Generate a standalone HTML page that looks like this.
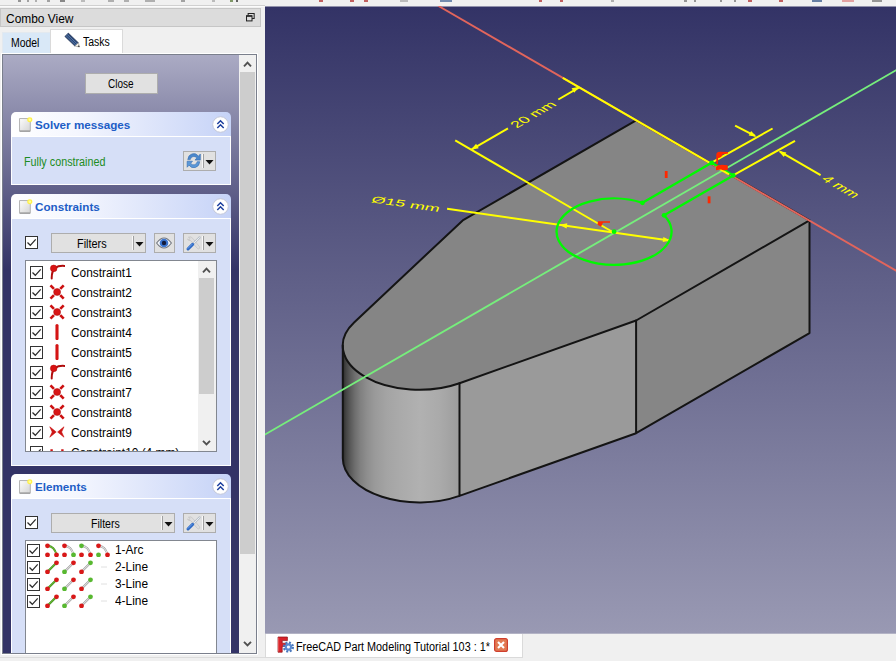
<!DOCTYPE html>
<html><head><meta charset="utf-8"><title>FreeCAD</title>
<style>
html,body{margin:0;padding:0;}
body{width:896px;height:661px;overflow:hidden;background:#f0f0f0;font-family:"Liberation Sans",sans-serif;font-size:12px;color:#000;}
#app{position:relative;width:896px;height:661px;overflow:hidden;background:#f0f0f0;}
#app div,#app span{position:absolute;box-sizing:border-box;white-space:nowrap;}
#app svg{position:absolute;}
.topline{left:0;top:5px;width:265px;height:1px;background:#d0d0d0;}
.topline2{left:0;top:6px;width:265px;height:1px;background:#fbfbfb;}
.tbres{top:0;height:1.5px;background:#555;}
#title{left:0;top:8px;width:261px;height:19px;background:#dcdcdc;border:1px solid #c6c6c6;}
#tabModel{left:2px;top:32px;width:49px;height:21px;background:#d9e8f7;border:1px solid #e3e9ef;border-bottom:none;}
#tabTasks{left:50px;top:29px;width:73px;height:25px;background:#fff;border:1px solid #dadada;border-bottom:none;}
#paneOuter{left:1px;top:53px;width:257px;height:602px;border:1px solid #fff;border-right-color:#fff;}
#pane{left:2px;top:54px;width:255px;height:600px;border:1px solid #7a7f8c;background:#f0f0f0;overflow:hidden;}
#scroll{left:0;top:0;width:236px;height:598px;background:linear-gradient(to bottom,#ababc4 0px,#333366 215px,#333366 100%);overflow:hidden;}
#vsb{left:236px;top:0;width:17px;height:598px;background:#f0f0f0;}
#vsb .thumb{left:1px;top:17px;width:15px;height:482px;background:#cdcdcd;}
.btn{background:#e1e1e1;border:1px solid #adadad;}
#app .t{line-height:14px;font-size:12px;}
.grp{left:8px;width:220px;}
.hdr{left:0;top:0;width:220px;height:25px;border-radius:5px 5px 0 0;background:linear-gradient(to right,#ffffff 0%,#f4f6fe 30%,#c6d3f7 100%);border-bottom:1px solid #fff;}
.hdr .t{font-weight:bold;color:#215dc6;}
.body{left:0;top:25px;width:220px;background:#d6dff7;border:1px solid #fff;border-top:none;}
.cb{width:13px;height:13px;background:#fff;border:1px solid #333;}
.list{background:#fff;border:1px solid #828790;overflow:hidden;}
#view{left:265px;top:6px;width:631px;height:628px;overflow:hidden;}
#view svg{left:0;top:0;}
#mdi{left:265px;top:634px;width:631px;height:27px;background:#f0f0f0;}
.mditab{left:0;top:0;width:258px;height:24px;background:#fff;border:1px solid #dadada;border-top:none;}
.fcico{left:11px;top:2px;}
.mdit{left:30px;top:6px;line-height:14px;transform-origin:0 50%;transform:scaleX(0.903);}
.mdix{left:228px;top:4px;width:14px;height:14px;}
.stline{left:0;top:657px;width:896px;height:1px;background:#dcdcdc;}

</style></head>
<body>
<div id="app">
<div class="topline"></div><div class="topline2"></div>
<div class="tbres" style="left:18px;width:3px;background:#777;opacity:.75"></div>
<div class="tbres" style="left:27px;width:2px;background:#888;opacity:.75"></div>
<div class="tbres" style="left:35px;width:2px;background:#999;opacity:.75"></div>
<div class="tbres" style="left:47px;width:3px;background:#888;opacity:.75"></div>
<div class="tbres" style="left:60px;width:5px;background:#666;opacity:.75"></div>
<div class="tbres" style="left:81px;width:4px;background:#aaa;opacity:.75"></div>
<div class="tbres" style="left:108px;width:6px;background:#999;opacity:.75"></div>
<div class="tbres" style="left:124px;width:5px;background:#999;opacity:.75"></div>
<div class="tbres" style="left:145px;width:10px;background:#999;opacity:.75"></div>
<div class="tbres" style="left:181px;width:4px;background:#888;opacity:.75"></div>
<div class="tbres" style="left:212px;width:3px;background:#aaa;opacity:.75"></div>
<div class="tbres" style="left:230px;width:3px;background:#5a7a3a;opacity:.75"></div>
<div class="tbres" style="left:236px;width:2px;background:#333;opacity:.75"></div>
<div class="tbres" style="left:319px;width:4px;background:#b03030;opacity:.75"></div>
<div class="tbres" style="left:350px;width:4px;background:#b03030;opacity:.75"></div>
<div class="tbres" style="left:364px;width:4px;background:#b03030;opacity:.75"></div>
<div class="tbres" style="left:400px;width:8px;background:#aaa;opacity:.75"></div>
<div class="tbres" style="left:440px;width:12px;background:#4a6a9a;opacity:.75"></div>
<div class="tbres" style="left:539px;width:3px;background:#b03030;opacity:.75"></div>
<div class="tbres" style="left:560px;width:3px;background:#b03030;opacity:.75"></div>
<div class="tbres" style="left:611px;width:3px;background:#999;opacity:.75"></div>
<div class="tbres" style="left:684px;width:3px;background:#777;opacity:.75"></div>
<div class="tbres" style="left:694px;width:2px;background:#777;opacity:.75"></div>
<div class="tbres" style="left:720px;width:2px;background:#777;opacity:.75"></div>
<div class="tbres" style="left:734px;width:2px;background:#777;opacity:.75"></div>
<div class="tbres" style="left:748px;width:4px;background:#b03030;opacity:.75"></div>
<div class="tbres" style="left:779px;width:4px;background:#b03030;opacity:.75"></div>
<div class="tbres" style="left:812px;width:10px;background:#3a5a8a;opacity:.75"></div>
<div class="tbres" style="left:842px;width:12px;background:#d88;opacity:.75"></div>
<div class="tbres" style="left:872px;width:10px;background:#777;opacity:.75"></div>
<div id="title"><span class="t" style="left:4.5px;top:2.9px;font-size:12px;transform-origin:0 50%;transform:scaleX(0.9954);">Combo View</span><svg style="left:245px;top:4px" width="8.6" height="8.6" viewBox="0 0 10 10"><path d="M2.5,3 V0.5 H9.5 V6.5 H7" fill="none" stroke="#222" stroke-width="1.2"/><rect x="0.6" y="3.2" width="6.4" height="6" fill="#dcdcdc" stroke="#222" stroke-width="1.2"/><path d="M0.6,3.6 H7" stroke="#222" stroke-width="1.6"/></svg></div>
<div id="tabModel"><span class="t" style="left:8px;top:2.6px;font-size:12px;transform-origin:0 50%;transform:scaleX(0.8690);">Model</span></div>
<div id="tabTasks"><svg style="left:13px;top:2px" width="18" height="17" viewBox="0 0 18 17"><path d="M4.3,1.1 L14.3,10.7 L10.9,14.1 L0.9,4.5 Z" fill="#2b4673" stroke="#1c2f52" stroke-width="0.7"/><path d="M3.2,2.4 L13.2,12 M2,3.6 L12,13.2" stroke="#5f84b8" stroke-width="0.8"/><path d="M14.3,10.7 L15.7,15 L10.9,14.1 Z" fill="#f4f0e6" stroke="#7a7a7a" stroke-width="0.5"/><path d="M14.6,13.3 L15.7,15 L13.6,14.6 Z" fill="#222"/></svg><span class="t" style="left:32.4px;top:4.6px;font-size:12px;transform-origin:0 50%;transform:scaleX(0.8737);">Tasks</span></div>
<div id="paneOuter"></div>
<div id="pane"><div id="scroll">
<div class="btn" style="left:82px;top:18px;width:73px;height:21px"><span class="t" style="left:21.6px;top:3.3px;font-size:12px;transform-origin:0 50%;transform:scaleX(0.8312);">Close</span></div>
<div class="grp" style="top:57px;height:73px">
<div class="hdr"><svg style="left:7.5px;top:5px" width="14" height="15.4" viewBox="0 0 13 15" preserveAspectRatio="none"><defs><linearGradient id="dg1" x1="0" y1="0" x2="1" y2="1"><stop offset="0" stop-color="#fdfdfd"/><stop offset="1" stop-color="#d4d4d4"/></linearGradient></defs><path d="M0.5,1.5 H10.5 V13.5 H0.5 Z" fill="url(#dg1)" stroke="#b0b0b0" stroke-width="0.9"/><path d="M0.5,13.9 H10.5" stroke="#8a8a8a" stroke-width="0.9"/><circle cx="10" cy="2.6" r="2.4" fill="#fff04a"/><circle cx="10" cy="2.6" r="1.2" fill="#ffff9a"/></svg><span class="t" style="left:24px;top:5.8px;font-size:11px;transform-origin:0 50%;transform:scaleX(1.06)">Solver messages</span><svg style="left:201px;top:4px" width="17" height="17" viewBox="0 0 17 17"><circle cx="8.5" cy="8.5" r="7.8" fill="#fff" stroke="#c4c8d8" stroke-width="1"/><path d="M5.3,8 L8.5,4.8 L11.7,8 M5.3,12 L8.5,8.8 L11.7,12" fill="none" stroke="#1c3f9e" stroke-width="1.5"/></svg></div>
<div class="body" style="height:48px">
<span class="t" style="left:12px;top:18.1px;font-size:12px;transform-origin:0 50%;transform:scaleX(0.8985);color:#1c8c22">Fully constrained</span><div class="btn" style="left:171px;top:14px;width:33px;height:20px"><svg style="left:1px;top:0px" width="18" height="18" viewBox="0.5 1 17.5 15.6" preserveAspectRatio="none"><path d="M3.2,7.6 A5.8,5.6 0 0 1 13.6,4.6 L15.4,2.8 V8 H10.2 L12,6.2 A3.6,3.4 0 0 0 5.6,7.6 Z" fill="#4a88cc" stroke="#3a70b4" stroke-width="0.6"/><path d="M14.8,9.4 A5.8,5.6 0 0 1 4.4,12.4 L2.6,14.2 V9 H7.8 L6,10.8 A3.6,3.4 0 0 0 12.4,9.4 Z" fill="#5a98d8" stroke="#3a70b4" stroke-width="0.6"/></svg><div style="left:19px;top:2px;width:1px;height:14px;background:#a0a0a0"></div><div style="left:18px;top:2px;width:1px;height:14px;background:#f8f8f8"></div><svg style="left:21px;top:8px" width="9" height="5" viewBox="0 0 9 5"><path d="M0.5,0 H8.5 L4.5,4.5 Z" fill="#111"/></svg></div>
</div></div>
<div class="grp" style="top:139px;height:272px">
<div class="hdr"><svg style="left:7.5px;top:5px" width="14" height="15.4" viewBox="0 0 13 15" preserveAspectRatio="none"><defs><linearGradient id="dg2" x1="0" y1="0" x2="1" y2="1"><stop offset="0" stop-color="#fdfdfd"/><stop offset="1" stop-color="#d4d4d4"/></linearGradient></defs><path d="M0.5,1.5 H10.5 V13.5 H0.5 Z" fill="url(#dg2)" stroke="#b0b0b0" stroke-width="0.9"/><path d="M0.5,13.9 H10.5" stroke="#8a8a8a" stroke-width="0.9"/><circle cx="10" cy="2.6" r="2.4" fill="#fff04a"/><circle cx="10" cy="2.6" r="1.2" fill="#ffff9a"/></svg><span class="t" style="left:24px;top:5.8px;font-size:11px;transform-origin:0 50%;transform:scaleX(1.06)">Constraints</span><svg style="left:201px;top:4px" width="17" height="17" viewBox="0 0 17 17"><circle cx="8.5" cy="8.5" r="7.8" fill="#fff" stroke="#c4c8d8" stroke-width="1"/><path d="M5.3,8 L8.5,4.8 L11.7,8 M5.3,12 L8.5,8.8 L11.7,12" fill="none" stroke="#1c3f9e" stroke-width="1.5"/></svg></div>
<div class="body" style="height:247px">
<div class="cb" style="left:13px;top:17px"><svg style="left:0;top:0" width="11" height="11" viewBox="0 0 11 11"><path d="M1.5,5.5 L4.3,8.3 L9.7,2.3" fill="none" stroke="#2a2a2a" stroke-width="1.25"/></svg></div><div class="btn" style="left:39px;top:14px;width:95px;height:20px"><span class="t" style="left:25.2px;top:2.5px;font-size:12px;transform-origin:0 50%;transform:scaleX(0.9062);">Filters</span><div style="left:81px;top:2px;width:1px;height:14px;background:#a0a0a0"></div><div style="left:80px;top:2px;width:1px;height:14px;background:#f8f8f8"></div><svg style="left:83px;top:8px" width="9" height="5" viewBox="0 0 9 5"><path d="M0.5,0 H8.5 L4.5,4.5 Z" fill="#111"/></svg></div><div class="btn" style="left:142px;top:14px;width:21px;height:20px"><svg style="left:1px;top:2px" width="16" height="14" viewBox="0 0 16 14"><path d="M0.6,7 Q8,-3 15.4,7 Q8,17 0.6,7 Z" fill="#f4f6fa" stroke="#70757e" stroke-width="1.1"/><circle cx="8" cy="7" r="4.3" fill="#3c76d0"/><circle cx="8" cy="7" r="2.2" fill="#141c3c"/></svg></div><div class="btn" style="left:171px;top:14px;width:33px;height:20px"><svg style="left:1px;top:1px" width="18" height="17" viewBox="0 0 18 17"><path d="M3.4,2.2 Q6.2,1 7.8,3.4 L14.6,11.8 Q15.2,13.4 13.8,13.9 Q12.6,14 12,13 L5.6,5.6 Q3.4,6 2.4,4.2 L4.4,4.6 L5,3.2 Z" fill="#dedede" stroke="#c2c2c2" stroke-width="0.7"/><path d="M14.6,2.4 L8,9" stroke="#b8c0c8" stroke-width="2.2" stroke-linecap="round"/><path d="M14.4,2.6 L8.4,8.6" stroke="#eef2f6" stroke-width="0.9" stroke-linecap="round"/><path d="M7.6,9.4 L3,14" stroke="#2c68c4" stroke-width="3" stroke-linecap="round"/><path d="M7.4,9 L3,13.4" stroke="#6ea2ea" stroke-width="1" stroke-linecap="round"/></svg><div style="left:19px;top:2px;width:1px;height:14px;background:#a0a0a0"></div><div style="left:18px;top:2px;width:1px;height:14px;background:#f8f8f8"></div><svg style="left:21px;top:8px" width="9" height="5" viewBox="0 0 9 5"><path d="M0.5,0 H8.5 L4.5,4.5 Z" fill="#111"/></svg></div><div class="list" style="left:13px;top:41px;width:192px;height:192px"><div class="row" style="left:0;top:1px;width:172px;height:20px"><div class="cb" style="left:4px;top:4px"><svg style="left:0;top:0" width="11" height="11" viewBox="0 0 11 11"><path d="M1.5,5.5 L4.3,8.3 L9.7,2.3" fill="none" stroke="#2a2a2a" stroke-width="1.25"/></svg></div><svg style="left:23px;top:2px" width="16" height="16" viewBox="0 0 16 16"><path d="M15.3,1.9 C8,1.5 2.5,3.5 2.7,14.5" fill="none" stroke="#b00c0c" stroke-width="2" stroke-linecap="round"/><circle cx="4.7" cy="4.4" r="3.3" fill="#d81212" stroke="#b00c0c" stroke-width="0.5"/></svg><span class="t" style="left:44.9px;top:4px;transform-origin:0 50%;transform:scaleX(0.99)">Constraint1</span></div><div class="row" style="left:0;top:21px;width:172px;height:20px"><div class="cb" style="left:4px;top:4px"><svg style="left:0;top:0" width="11" height="11" viewBox="0 0 11 11"><path d="M1.5,5.5 L4.3,8.3 L9.7,2.3" fill="none" stroke="#2a2a2a" stroke-width="1.25"/></svg></div><svg style="left:23px;top:2px" width="16" height="16" viewBox="0 0 16 16"><path d="M1.5,1.4 L14.7,14.6 M14.7,1.4 L1.5,14.6" stroke="#cc1010" stroke-width="2.7" stroke-dasharray="4.9 8.87 4.9"/><circle cx="8.1" cy="8" r="3.5" fill="#d81414" stroke="#a81010" stroke-width="0.5"/></svg><span class="t" style="left:44.9px;top:4px;transform-origin:0 50%;transform:scaleX(0.99)">Constraint2</span></div><div class="row" style="left:0;top:41px;width:172px;height:20px"><div class="cb" style="left:4px;top:4px"><svg style="left:0;top:0" width="11" height="11" viewBox="0 0 11 11"><path d="M1.5,5.5 L4.3,8.3 L9.7,2.3" fill="none" stroke="#2a2a2a" stroke-width="1.25"/></svg></div><svg style="left:23px;top:2px" width="16" height="16" viewBox="0 0 16 16"><path d="M1.5,1.4 L14.7,14.6 M14.7,1.4 L1.5,14.6" stroke="#cc1010" stroke-width="2.7" stroke-dasharray="4.9 8.87 4.9"/><circle cx="8.1" cy="8" r="3.5" fill="#d81414" stroke="#a81010" stroke-width="0.5"/></svg><span class="t" style="left:44.9px;top:4px;transform-origin:0 50%;transform:scaleX(0.99)">Constraint3</span></div><div class="row" style="left:0;top:61px;width:172px;height:20px"><div class="cb" style="left:4px;top:4px"><svg style="left:0;top:0" width="11" height="11" viewBox="0 0 11 11"><path d="M1.5,5.5 L4.3,8.3 L9.7,2.3" fill="none" stroke="#2a2a2a" stroke-width="1.25"/></svg></div><svg style="left:23px;top:2px" width="16" height="16" viewBox="0 0 16 16"><path d="M8,1.6 V14.6" stroke="#d41414" stroke-width="3.1" stroke-linecap="round"/></svg><span class="t" style="left:44.9px;top:4px;transform-origin:0 50%;transform:scaleX(0.99)">Constraint4</span></div><div class="row" style="left:0;top:81px;width:172px;height:20px"><div class="cb" style="left:4px;top:4px"><svg style="left:0;top:0" width="11" height="11" viewBox="0 0 11 11"><path d="M1.5,5.5 L4.3,8.3 L9.7,2.3" fill="none" stroke="#2a2a2a" stroke-width="1.25"/></svg></div><svg style="left:23px;top:2px" width="16" height="16" viewBox="0 0 16 16"><path d="M8,1.6 V14.6" stroke="#d41414" stroke-width="3.1" stroke-linecap="round"/></svg><span class="t" style="left:44.9px;top:4px;transform-origin:0 50%;transform:scaleX(0.99)">Constraint5</span></div><div class="row" style="left:0;top:101px;width:172px;height:20px"><div class="cb" style="left:4px;top:4px"><svg style="left:0;top:0" width="11" height="11" viewBox="0 0 11 11"><path d="M1.5,5.5 L4.3,8.3 L9.7,2.3" fill="none" stroke="#2a2a2a" stroke-width="1.25"/></svg></div><svg style="left:23px;top:2px" width="16" height="16" viewBox="0 0 16 16"><path d="M15.3,1.9 C8,1.5 2.5,3.5 2.7,14.5" fill="none" stroke="#b00c0c" stroke-width="2" stroke-linecap="round"/><circle cx="4.7" cy="4.4" r="3.3" fill="#d81212" stroke="#b00c0c" stroke-width="0.5"/></svg><span class="t" style="left:44.9px;top:4px;transform-origin:0 50%;transform:scaleX(0.99)">Constraint6</span></div><div class="row" style="left:0;top:121px;width:172px;height:20px"><div class="cb" style="left:4px;top:4px"><svg style="left:0;top:0" width="11" height="11" viewBox="0 0 11 11"><path d="M1.5,5.5 L4.3,8.3 L9.7,2.3" fill="none" stroke="#2a2a2a" stroke-width="1.25"/></svg></div><svg style="left:23px;top:2px" width="16" height="16" viewBox="0 0 16 16"><path d="M1.5,1.4 L14.7,14.6 M14.7,1.4 L1.5,14.6" stroke="#cc1010" stroke-width="2.7" stroke-dasharray="4.9 8.87 4.9"/><circle cx="8.1" cy="8" r="3.5" fill="#d81414" stroke="#a81010" stroke-width="0.5"/></svg><span class="t" style="left:44.9px;top:4px;transform-origin:0 50%;transform:scaleX(0.99)">Constraint7</span></div><div class="row" style="left:0;top:141px;width:172px;height:20px"><div class="cb" style="left:4px;top:4px"><svg style="left:0;top:0" width="11" height="11" viewBox="0 0 11 11"><path d="M1.5,5.5 L4.3,8.3 L9.7,2.3" fill="none" stroke="#2a2a2a" stroke-width="1.25"/></svg></div><svg style="left:23px;top:2px" width="16" height="16" viewBox="0 0 16 16"><path d="M1.5,1.4 L14.7,14.6 M14.7,1.4 L1.5,14.6" stroke="#cc1010" stroke-width="2.7" stroke-dasharray="4.9 8.87 4.9"/><circle cx="8.1" cy="8" r="3.5" fill="#d81414" stroke="#a81010" stroke-width="0.5"/></svg><span class="t" style="left:44.9px;top:4px;transform-origin:0 50%;transform:scaleX(0.99)">Constraint8</span></div><div class="row" style="left:0;top:161px;width:172px;height:20px"><div class="cb" style="left:4px;top:4px"><svg style="left:0;top:0" width="11" height="11" viewBox="0 0 11 11"><path d="M1.5,5.5 L4.3,8.3 L9.7,2.3" fill="none" stroke="#2a2a2a" stroke-width="1.25"/></svg></div><svg style="left:23px;top:2px" width="16" height="16" viewBox="0 0 16 16"><path d="M0.8,2.8 L7.2,8 L0.8,13.2 L3.2,8 Z M15,2.8 L8.6,8 L15,13.2 L12.6,8 Z" fill="#cc1414" stroke="#cc1414" stroke-width="0.6" stroke-linejoin="round"/></svg><span class="t" style="left:44.9px;top:4px;transform-origin:0 50%;transform:scaleX(0.99)">Constraint9</span></div><div class="row" style="left:0;top:181px;width:172px;height:20px"><div class="cb" style="left:4px;top:4px"><svg style="left:0;top:0" width="11" height="11" viewBox="0 0 11 11"><path d="M1.5,5.5 L4.3,8.3 L9.7,2.3" fill="none" stroke="#2a2a2a" stroke-width="1.25"/></svg></div><svg style="left:23px;top:2px" width="16" height="16" viewBox="0 0 16 16"><path d="M2.6,5.2 V14 M13.4,5.2 V14" stroke="#cc1414" stroke-width="2.4"/><path d="M2,11 H14" stroke="#cc1414" stroke-width="1.6"/></svg><span class="t" style="left:44.9px;top:4px;transform-origin:0 50%;transform:scaleX(0.99)">Constraint10 (4 mm)</span></div><div style="left:172px;top:0;width:18px;height:190px;background:#f0f0f0"><svg style="left:4px;top:6px" width="9" height="6" viewBox="0 0 9 6"><path d="M1,5.3 L4.5,1.7 L8,5.3" fill="none" stroke="#505050" stroke-width="1.9"/></svg><div style="left:1px;top:17px;width:15px;height:116px;background:#cdcdcd"></div><svg style="left:4px;top:179px" width="9" height="6" viewBox="0 0 9 6"><path d="M1,0.9 L4.5,4.5 L8,0.9" fill="none" stroke="#505050" stroke-width="1.9"/></svg></div></div>
</div></div>
<div class="grp" style="top:419px;height:185px">
<div class="hdr"><svg style="left:7.5px;top:5px" width="14" height="15.4" viewBox="0 0 13 15" preserveAspectRatio="none"><defs><linearGradient id="dg3" x1="0" y1="0" x2="1" y2="1"><stop offset="0" stop-color="#fdfdfd"/><stop offset="1" stop-color="#d4d4d4"/></linearGradient></defs><path d="M0.5,1.5 H10.5 V13.5 H0.5 Z" fill="url(#dg3)" stroke="#b0b0b0" stroke-width="0.9"/><path d="M0.5,13.9 H10.5" stroke="#8a8a8a" stroke-width="0.9"/><circle cx="10" cy="2.6" r="2.4" fill="#fff04a"/><circle cx="10" cy="2.6" r="1.2" fill="#ffff9a"/></svg><span class="t" style="left:24px;top:5.8px;font-size:11px;transform-origin:0 50%;transform:scaleX(1.06)">Elements</span><svg style="left:201px;top:4px" width="17" height="17" viewBox="0 0 17 17"><circle cx="8.5" cy="8.5" r="7.8" fill="#fff" stroke="#c4c8d8" stroke-width="1"/><path d="M5.3,8 L8.5,4.8 L11.7,8 M5.3,12 L8.5,8.8 L11.7,12" fill="none" stroke="#1c3f9e" stroke-width="1.5"/></svg></div>
<div class="body" style="height:160px">
<div class="cb" style="left:13px;top:17px"><svg style="left:0;top:0" width="11" height="11" viewBox="0 0 11 11"><path d="M1.5,5.5 L4.3,8.3 L9.7,2.3" fill="none" stroke="#2a2a2a" stroke-width="1.25"/></svg></div><div class="btn" style="left:39px;top:14px;width:124px;height:20px"><span class="t" style="left:39.4px;top:2.8px;font-size:12px;transform-origin:0 50%;transform:scaleX(0.8817);">Filters</span><div style="left:110px;top:2px;width:1px;height:14px;background:#a0a0a0"></div><div style="left:109px;top:2px;width:1px;height:14px;background:#f8f8f8"></div><svg style="left:112px;top:8px" width="9" height="5" viewBox="0 0 9 5"><path d="M0.5,0 H8.5 L4.5,4.5 Z" fill="#111"/></svg></div><div class="btn" style="left:171px;top:14px;width:33px;height:20px"><svg style="left:1px;top:1px" width="18" height="17" viewBox="0 0 18 17"><path d="M3.4,2.2 Q6.2,1 7.8,3.4 L14.6,11.8 Q15.2,13.4 13.8,13.9 Q12.6,14 12,13 L5.6,5.6 Q3.4,6 2.4,4.2 L4.4,4.6 L5,3.2 Z" fill="#dedede" stroke="#c2c2c2" stroke-width="0.7"/><path d="M14.6,2.4 L8,9" stroke="#b8c0c8" stroke-width="2.2" stroke-linecap="round"/><path d="M14.4,2.6 L8.4,8.6" stroke="#eef2f6" stroke-width="0.9" stroke-linecap="round"/><path d="M7.6,9.4 L3,14" stroke="#2c68c4" stroke-width="3" stroke-linecap="round"/><path d="M7.4,9 L3,13.4" stroke="#6ea2ea" stroke-width="1" stroke-linecap="round"/></svg><div style="left:19px;top:2px;width:1px;height:14px;background:#a0a0a0"></div><div style="left:18px;top:2px;width:1px;height:14px;background:#f8f8f8"></div><svg style="left:21px;top:8px" width="9" height="5" viewBox="0 0 9 5"><path d="M0.5,0 H8.5 L4.5,4.5 Z" fill="#111"/></svg></div><div class="list" style="left:13px;top:41px;width:192px;height:140px"><div class="row" style="left:0;top:1px;width:190px;height:17px"><div class="cb" style="left:1px;top:2px"><svg style="left:0;top:0" width="11" height="11" viewBox="0 0 11 11"><path d="M1.5,5.5 L4.3,8.3 L9.7,2.3" fill="none" stroke="#2a2a2a" stroke-width="1.25"/></svg></div><svg style="left:19px;top:1px" width="70" height="14" viewBox="0 0 70 14"><g transform="translate(0,0)"><path d="M2.5,2.8 Q9.5,3.3 11.5,11.8" fill="none" stroke="#3a8a1c" stroke-width="2.1"/><path d="M2.5,2.8 Q9.5,3.3 11.5,11.8" fill="none" stroke="#7ed038" stroke-width="0.9"/><circle cx="2.5" cy="2.8" r="2.4" fill="#d81818"/><circle cx="11.5" cy="11.8" r="2.4" fill="#d81818"/><circle cx="2.5" cy="11.8" r="2.4" fill="#d81818"/></g><g transform="translate(17,0)"><path d="M2.5,2.8 Q9.5,3.3 11.5,11.8" fill="none" stroke="#9a9a9a" stroke-width="2.1"/><path d="M2.5,2.8 Q9.5,3.3 11.5,11.8" fill="none" stroke="#f2f2f2" stroke-width="1"/><circle cx="2.5" cy="2.8" r="2.4" fill="#d81818"/><circle cx="11.5" cy="11.8" r="2.4" fill="#58b830"/><circle cx="2.5" cy="11.8" r="2.4" fill="#d81818"/></g><g transform="translate(34,0)"><path d="M2.5,2.8 Q9.5,3.3 11.5,11.8" fill="none" stroke="#9a9a9a" stroke-width="2.1"/><path d="M2.5,2.8 Q9.5,3.3 11.5,11.8" fill="none" stroke="#f2f2f2" stroke-width="1"/><circle cx="2.5" cy="2.8" r="2.4" fill="#58b830"/><circle cx="11.5" cy="11.8" r="2.4" fill="#d81818"/><circle cx="2.5" cy="11.8" r="2.4" fill="#d81818"/></g><g transform="translate(51,0)"><path d="M2.5,2.8 Q9.5,3.3 11.5,11.8" fill="none" stroke="#9a9a9a" stroke-width="2.1"/><path d="M2.5,2.8 Q9.5,3.3 11.5,11.8" fill="none" stroke="#f2f2f2" stroke-width="1"/><circle cx="2.5" cy="2.8" r="2.4" fill="#d81818"/><circle cx="11.5" cy="11.8" r="2.4" fill="#d81818"/><circle cx="2.5" cy="11.8" r="2.4" fill="#58b830"/></g></svg><span class="t" style="left:88.8px;top:1px;transform-origin:0 50%;transform:scaleX(0.99)">1-Arc</span></div><div class="row" style="left:0;top:18px;width:190px;height:17px"><div class="cb" style="left:1px;top:2px"><svg style="left:0;top:0" width="11" height="11" viewBox="0 0 11 11"><path d="M1.5,5.5 L4.3,8.3 L9.7,2.3" fill="none" stroke="#2a2a2a" stroke-width="1.25"/></svg></div><svg style="left:19px;top:1px" width="70" height="14" viewBox="0 0 70 14"><g transform="translate(0,0)"><path d="M2.5,11.8 L11.5,2.8" fill="none" stroke="#3a8a1c" stroke-width="2.1"/><path d="M2.5,11.8 L11.5,2.8" fill="none" stroke="#7ed038" stroke-width="0.9"/><circle cx="2.5" cy="11.8" r="2.4" fill="#d81818"/><circle cx="11.5" cy="2.8" r="2.4" fill="#d81818"/></g><g transform="translate(17,0)"><path d="M2.5,11.8 L11.5,2.8" fill="none" stroke="#9a9a9a" stroke-width="2.1"/><path d="M2.5,11.8 L11.5,2.8" fill="none" stroke="#f2f2f2" stroke-width="1"/><circle cx="2.5" cy="11.8" r="2.4" fill="#58b830"/><circle cx="11.5" cy="2.8" r="2.4" fill="#d81818"/></g><g transform="translate(34,0)"><path d="M2.5,11.8 L11.5,2.8" fill="none" stroke="#9a9a9a" stroke-width="2.1"/><path d="M2.5,11.8 L11.5,2.8" fill="none" stroke="#f2f2f2" stroke-width="1"/><circle cx="2.5" cy="11.8" r="2.4" fill="#d81818"/><circle cx="11.5" cy="2.8" r="2.4" fill="#58b830"/></g><path d="M56,7 H62" stroke="#e0e0e0" stroke-width="1"/></svg><span class="t" style="left:88.8px;top:1px;transform-origin:0 50%;transform:scaleX(0.99)">2-Line</span></div><div class="row" style="left:0;top:35px;width:190px;height:17px"><div class="cb" style="left:1px;top:2px"><svg style="left:0;top:0" width="11" height="11" viewBox="0 0 11 11"><path d="M1.5,5.5 L4.3,8.3 L9.7,2.3" fill="none" stroke="#2a2a2a" stroke-width="1.25"/></svg></div><svg style="left:19px;top:1px" width="70" height="14" viewBox="0 0 70 14"><g transform="translate(0,0)"><path d="M2.5,11.8 L11.5,2.8" fill="none" stroke="#3a8a1c" stroke-width="2.1"/><path d="M2.5,11.8 L11.5,2.8" fill="none" stroke="#7ed038" stroke-width="0.9"/><circle cx="2.5" cy="11.8" r="2.4" fill="#d81818"/><circle cx="11.5" cy="2.8" r="2.4" fill="#d81818"/></g><g transform="translate(17,0)"><path d="M2.5,11.8 L11.5,2.8" fill="none" stroke="#9a9a9a" stroke-width="2.1"/><path d="M2.5,11.8 L11.5,2.8" fill="none" stroke="#f2f2f2" stroke-width="1"/><circle cx="2.5" cy="11.8" r="2.4" fill="#58b830"/><circle cx="11.5" cy="2.8" r="2.4" fill="#d81818"/></g><g transform="translate(34,0)"><path d="M2.5,11.8 L11.5,2.8" fill="none" stroke="#9a9a9a" stroke-width="2.1"/><path d="M2.5,11.8 L11.5,2.8" fill="none" stroke="#f2f2f2" stroke-width="1"/><circle cx="2.5" cy="11.8" r="2.4" fill="#d81818"/><circle cx="11.5" cy="2.8" r="2.4" fill="#58b830"/></g><path d="M56,7 H62" stroke="#e0e0e0" stroke-width="1"/></svg><span class="t" style="left:88.8px;top:1px;transform-origin:0 50%;transform:scaleX(0.99)">3-Line</span></div><div class="row" style="left:0;top:52px;width:190px;height:17px"><div class="cb" style="left:1px;top:2px"><svg style="left:0;top:0" width="11" height="11" viewBox="0 0 11 11"><path d="M1.5,5.5 L4.3,8.3 L9.7,2.3" fill="none" stroke="#2a2a2a" stroke-width="1.25"/></svg></div><svg style="left:19px;top:1px" width="70" height="14" viewBox="0 0 70 14"><g transform="translate(0,0)"><path d="M2.5,11.8 L11.5,2.8" fill="none" stroke="#3a8a1c" stroke-width="2.1"/><path d="M2.5,11.8 L11.5,2.8" fill="none" stroke="#7ed038" stroke-width="0.9"/><circle cx="2.5" cy="11.8" r="2.4" fill="#d81818"/><circle cx="11.5" cy="2.8" r="2.4" fill="#d81818"/></g><g transform="translate(17,0)"><path d="M2.5,11.8 L11.5,2.8" fill="none" stroke="#9a9a9a" stroke-width="2.1"/><path d="M2.5,11.8 L11.5,2.8" fill="none" stroke="#f2f2f2" stroke-width="1"/><circle cx="2.5" cy="11.8" r="2.4" fill="#58b830"/><circle cx="11.5" cy="2.8" r="2.4" fill="#d81818"/></g><g transform="translate(34,0)"><path d="M2.5,11.8 L11.5,2.8" fill="none" stroke="#9a9a9a" stroke-width="2.1"/><path d="M2.5,11.8 L11.5,2.8" fill="none" stroke="#f2f2f2" stroke-width="1"/><circle cx="2.5" cy="11.8" r="2.4" fill="#d81818"/><circle cx="11.5" cy="2.8" r="2.4" fill="#58b830"/></g><path d="M56,7 H62" stroke="#e0e0e0" stroke-width="1"/></svg><span class="t" style="left:88.8px;top:1px;transform-origin:0 50%;transform:scaleX(0.99)">4-Line</span></div></div>
</div></div>
</div>
<div id="vsb"><svg style="left:4px;top:6px" width="9" height="6" viewBox="0 0 9 6"><path d="M1,5.3 L4.5,1.7 L8,5.3" fill="none" stroke="#505050" stroke-width="1.9"/></svg><div class="thumb"></div><svg style="left:4px;top:586px" width="9" height="6" viewBox="0 0 9 6"><path d="M1,0.9 L4.5,4.5 L8,0.9" fill="none" stroke="#505050" stroke-width="1.9"/></svg></div>
</div>
<div class="stline"></div>
<div id="view"><svg class="v3d" width="631" height="628" viewBox="265 6 631 628">
<defs>
<linearGradient id="bg" x1="0" y1="0" x2="0" y2="1"><stop offset="0" stop-color="#333366"/><stop offset="1" stop-color="#9999b3"/></linearGradient>
<linearGradient id="cyl" gradientUnits="userSpaceOnUse" x1="343" y1="0" x2="459" y2="0">
<stop offset="0.000" stop-color="#2c2c2c"/>
<stop offset="0.026" stop-color="#444444"/>
<stop offset="0.060" stop-color="#585858"/>
<stop offset="0.103" stop-color="#6e6e6e"/>
<stop offset="0.147" stop-color="#7f7f7f"/>
<stop offset="0.207" stop-color="#8e8e8e"/>
<stop offset="0.276" stop-color="#9a9a9a"/>
<stop offset="0.379" stop-color="#a4a4a4"/>
<stop offset="0.491" stop-color="#aaaaaa"/>
<stop offset="0.664" stop-color="#b1b1b1"/>
<stop offset="0.836" stop-color="#aaaaaa"/>
<stop offset="1.000" stop-color="#9d9d9d"/>
</linearGradient>
</defs>
<rect x="265" y="6.5" width="631" height="627.2" fill="url(#bg)"/>
<path d="M342.8,345.6 L342.8,458.2 A76.6,44.2 0 0 0 459.5,495.9 L459.5,383.2 A76.6,44.2 0 0 1 342.8,345.6 Z" fill="url(#cyl)"/>
<path d="M459.5,383.2 L459.5,495.9 L636.1,433.2 L636.1,320.5 Z" fill="#9a9a9a"/>
<path d="M636.1,320.5 L636.1,433.2 L809.5,333.1 L809.5,220.4 Z" fill="#868686"/>
<path d="M636.1,120.4 L809.5,220.4 L636.1,320.5 L459.5,383.2 A76.6,44.2 0 0 1 354.1,322.4 L462.7,220.4 Z" fill="#858585"/>
<path d="M636.1,120.4 L809.5,220.4 L636.1,320.5 L459.5,383.2 A76.6,44.2 0 0 1 354.1,322.4 L462.7,220.4 Z" stroke="#141414" stroke-width="2" fill="none" stroke-linecap="round" stroke-linejoin="round"/>
<path d="M342.8,345.6 L342.8,458.2 A76.6,44.2 0 0 0 459.5,495.9 L636.1,433.2 L809.5,333.1 L809.5,220.4 M459.5,383.2 L459.5,495.9 M636.1,320.5 L636.1,433.2" stroke="#141414" stroke-width="2" fill="none" stroke-linecap="round" stroke-linejoin="round"/>
<line x1="438.5" y1="6" x2="897" y2="271.3" stroke="#e2655c" stroke-width="1.9"/>
<line x1="264" y1="435.1" x2="897" y2="69.7" stroke="#76ee7c" stroke-width="1.9"/>
<line x1="562.8" y1="77.8" x2="712.0" y2="164.1" stroke="#ffff00" stroke-width="2" fill="none"/>
<line x1="455.2" y1="140.4" x2="614.4" y2="233.0" stroke="#ffff00" stroke-width="2" fill="none"/>
<line x1="471.7" y1="149.3" x2="508" y2="128.4" stroke="#ffff00" stroke-width="2" fill="none"/>
<line x1="558.3" y1="99.5" x2="578.8" y2="87.6" stroke="#ffff00" stroke-width="2" fill="none"/>
<polygon points="470.9,149.8 476.1,143.8 478.7,148.3" fill="#ffff00"/>
<polygon points="579.4,86.8 574.2,92.8 571.6,88.3" fill="#ffff00"/>
<text transform="matrix(0.7071,-0.4082,0.7071,0.4082,516.8,128.4)" font-family="Liberation Sans, sans-serif" font-size="16" fill="#ffff00" textLength="57.3" lengthAdjust="spacingAndGlyphs">20 mm</text>
<line x1="447.1" y1="208.8" x2="669.5" y2="240.4" stroke="#ffff00" stroke-width="2" fill="none"/>
<polygon points="559.5,224.8 567.3,223.3 566.6,228.4" fill="#ffff00"/>
<polygon points="670.5,240.5 662.7,242.0 663.4,236.9" fill="#ffff00"/>
<text transform="matrix(0.9712,0.1373,-0.2379,0.5608,370.6,202.2)" font-family="Liberation Sans, sans-serif" font-size="16" fill="#ffff00" textLength="69.9" lengthAdjust="spacingAndGlyphs">Ø15 mm</text>
<line x1="711.2" y1="162.9" x2="772.6" y2="128.5" stroke="#ffff00" stroke-width="2" fill="none"/>
<line x1="733.1" y1="175.4" x2="795" y2="140.8" stroke="#ffff00" stroke-width="2" fill="none"/>
<line x1="735.1" y1="125.6" x2="755" y2="135.9" stroke="#ffff00" stroke-width="2" fill="none"/>
<line x1="780" y1="151.7" x2="820.6" y2="175.2" stroke="#ffff00" stroke-width="2" fill="none"/>
<polygon points="756.5,136.8 748.7,135.6 751.1,131.0" fill="#ffff00"/>
<polygon points="778.6,150.9 786.4,152.4 783.8,156.9" fill="#ffff00"/>
<text transform="matrix(0.7071,0.4082,-0.7071,0.4082,820.6,179.6)" font-family="Liberation Sans, sans-serif" font-size="16" fill="#ffff00" textLength="46.5" lengthAdjust="spacingAndGlyphs">4 mm</text>
<g transform="translate(-0.3,-1.3)">
<path d="M642.8,204.1 A57.5,33.2 0 1 0 664.4,216.6" stroke="#00fa00" stroke-width="2.3" fill="none" stroke-linecap="round"/>
<path d="M642.8,204.1 L712.0,164.1 M664.4,216.6 L733.6,176.7 M712.0,164.1 L733.6,176.7" stroke="#00fa00" stroke-width="2.3" fill="none" stroke-linecap="round"/>
<circle cx="642.8" cy="204.1" r="2.4" fill="#00fa00"/>
<circle cx="664.4" cy="216.6" r="2.4" fill="#00fa00"/>
<circle cx="712.0" cy="164.1" r="2.4" fill="#00fa00"/>
<circle cx="733.6" cy="176.7" r="2.4" fill="#00fa00"/>
<circle cx="614.4" cy="233.0" r="2.4" fill="#00fa00"/>
</g>
<rect x="664.8" y="171" width="2.8" height="7" fill="#ff2800"/>
<rect x="707.7" y="196.3" width="2.8" height="7" fill="#ff2800"/>
<line x1="716" y1="166.8" x2="729" y2="174.3" stroke="#ffff00" stroke-width="2"/>
<path d="M716.3,164 L716.3,155 Q716.3,151.8 720,151.8 L728,152 L728,153.6 L722.6,154.2 Q721.6,158 718.2,158 L718,164 Z" fill="#ff2800"/>
<path d="M716,170.3 L716,167 Q716.5,165 719,165.3 L722,164.8 L727.6,165.3 L728,169.5 L724,170.6 L721,169.6 Z" fill="#ff2800"/>
<path d="M598,221.2 h12 v1.6 h-7 l-2,4 l-3.5,-2 z" fill="#ff2800"/>
</svg></div>
<div id="mdi"><div class="mditab"><svg class="fcico" width="18" height="18" viewBox="0 0 18 18"><path d="M1,1 H10.4 V4.6 H5.2 V7.2 H8.6 V10.4 H5.2 V16.2 H1 Z" fill="#d8222a" stroke="#8a1016" stroke-width="0.7"/><path d="M1.6,1.6 V15.6" stroke="#f06060" stroke-width="0.8"/><circle cx="11.4" cy="11" r="4.3" fill="none" stroke="#4a78bc" stroke-width="2.6" stroke-dasharray="1.9 1.477"/><circle cx="11.4" cy="11" r="3.7" fill="#5a8ad0"/><circle cx="11.4" cy="11" r="1.6" fill="#f4f8ff"/></svg><span class="mdit">FreeCAD Part Modeling Tutorial 103 : 1*</span><span class="mdix"><svg width="14" height="14" viewBox="0 0 14 14"><rect x="0.6" y="0.6" width="12.8" height="12.8" rx="2" fill="#e27a52" stroke="#cf3f2e" stroke-width="1.2"/><path d="M4,4 L10,10 M10,4 L4,10" stroke="#fff" stroke-width="2.1"/></svg></span></div></div>
</div>
</body></html>
